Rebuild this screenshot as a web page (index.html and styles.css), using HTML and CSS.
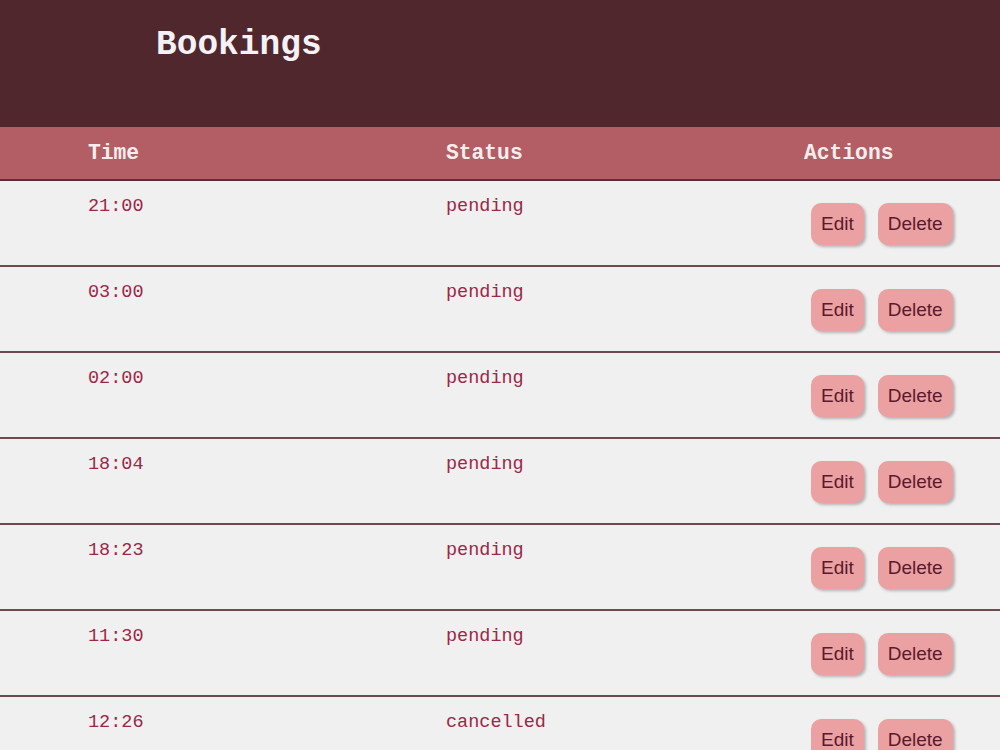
FILE: index.html
```html
<!DOCTYPE html>
<html lang="en">
<head>
  <meta charset="UTF-8">
  <meta name="viewport" content="width=device-width, initial-scale=1.0">
  <title>Bookings</title>
  <link rel="stylesheet" href="styles.css">
</head>
<body>

  <header class="top">
    <h1 class="title">Bookings</h1>
  </header>

  <!-- 예약 목록 -->
  <div class="list">
    <div class="row head">
      <div class="cell">Time</div>
      <div class="cell">Status</div>
      <div class="cell">Actions</div>
    </div>

    <div class="row">
      <div class="cell">21:00</div>
      <div class="cell">pending</div>
      <div class="cell actions"><button class="btn">Edit</button><button class="btn">Delete</button></div>
    </div>
    <div class="row">
      <div class="cell">03:00</div>
      <div class="cell">pending</div>
      <div class="cell actions"><button class="btn">Edit</button><button class="btn">Delete</button></div>
    </div>
    <div class="row">
      <div class="cell">02:00</div>
      <div class="cell">pending</div>
      <div class="cell actions"><button class="btn">Edit</button><button class="btn">Delete</button></div>
    </div>
    <div class="row">
      <div class="cell">18:04</div>
      <div class="cell">pending</div>
      <div class="cell actions"><button class="btn">Edit</button><button class="btn">Delete</button></div>
    </div>
    <div class="row">
      <div class="cell">18:23</div>
      <div class="cell">pending</div>
      <div class="cell actions"><button class="btn">Edit</button><button class="btn">Delete</button></div>
    </div>
    <div class="row">
      <div class="cell">11:30</div>
      <div class="cell">pending</div>
      <div class="cell actions"><button class="btn">Edit</button><button class="btn">Delete</button></div>
    </div>
    <div class="row">
      <div class="cell">12:26</div>
      <div class="cell">cancelled</div>
      <div class="cell actions"><button class="btn">Edit</button><button class="btn">Delete</button></div>
    </div>
  </div>

</body>
</html>
```

FILE: styles.css
```css
/* 기본 색상 */
html {
  --color-dark: #4f272d;
  --color-head: #b35e64;
  --color-bg: #f0f0f0;
  --color-text: #9b2847;
  --color-btn: #eba0a2;
  --color-btn-text: #5a1a2c;
}

body {
  margin: 0;
  background: var(--color-bg);
  font-family: "Liberation Mono", monospace;
}

/* 상단 헤더 */
.top {
  background: var(--color-dark);
  height: 127px;
  padding-left: 156px;
  box-sizing: border-box;
}

.title {
  margin: 0;
  padding-top: 25px;
  color: #f4f2f6;
  font-size: 34.5px;
  line-height: 40px;
  font-weight: bold;
}

/* 목록 */
.row {
  display: grid;
  grid-template-columns: 358px 358px 1fr;
  padding-left: 88px;
  border-bottom: 2px solid #6e4a50;
  color: var(--color-text);
  font-size: 18.5px;
  line-height: 22px;
}

.row .cell {
  padding-top: 15px;
}

.head {
  background: var(--color-head);
  color: #f5eeee;
  font-weight: bold;
  font-size: 21.3px;
  line-height: 24px;
  height: 54px;
  box-sizing: border-box;
  border-bottom-color: #5c2f36;
}

.head .cell {
  padding-top: 14px;
}

.actions {
  display: flex;
  gap: 14px;
  padding: 22px 0 20px 7px;
  align-items: flex-start;
}

.row .actions {
  padding-top: 22px;
}

.btn {
  height: 42px;
  padding: 0 10px;
  border: none;
  border-radius: 10px;
  background: var(--color-btn);
  color: var(--color-btn-text);
  font-family: "Liberation Sans", Arial, sans-serif;
  font-size: 19px;
  box-shadow: 2px 2px 3px rgba(0, 0, 0, 0.25);
}
```
